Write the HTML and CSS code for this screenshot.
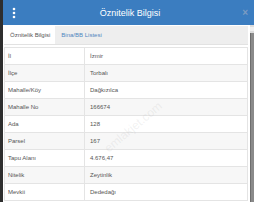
FILE: index.html
```html
<!DOCTYPE html>
<html lang="tr">
<head>
<meta charset="utf-8">
<title>Öznitelik Bilgisi</title>
<link rel="stylesheet" href="styles.css">
</head>
<body>
<div class="window">
  <div class="header">
    <svg class="dots" width="4" height="12" viewBox="0 0 4 12"><circle cx="2" cy="2" r="1.3" fill="#fff"/><circle cx="2" cy="6" r="1.3" fill="#fff"/><circle cx="2" cy="10" r="1.3" fill="#fff"/></svg>
    <div class="title">Öznitelik Bilgisi</div>
    <div class="close">×</div>
  </div>
  <div class="body">
    <div class="main">
      <div class="tabs">
        <div class="tab active">Öznitelik Bilgisi</div>
        <div class="tab">Bina/BB Listesi</div>
      </div>
      <table class="attrs">
        <tr><td>İl</td><td>İzmir</td></tr>
        <tr><td>İlçe</td><td>Torbalı</td></tr>
        <tr><td>Mahalle/Köy</td><td>Dağkızılca</td></tr>
        <tr><td>Mahalle No</td><td>166674</td></tr>
        <tr><td>Ada</td><td>128</td></tr>
        <tr><td>Parsel</td><td>167</td></tr>
        <tr><td>Tapu Alanı</td><td>4.676,47</td></tr>
        <tr><td>Nitelik</td><td>Zeytinlik</td></tr>
        <tr><td>Mevkii</td><td>Dededağı</td></tr>
      </table>
      <div class="watermark">emlakjet.com</div>
    </div>
    <div class="scrollbar">
      <div class="arrow"></div>
      <div class="thumb"></div>
    </div>
  </div>
</div>
</body>
</html>
```
FILE: styles.css
```css
html, body {
  margin: 0;
  padding: 0;
}
body {
  width: 254px;
  height: 202px;
  overflow: hidden;
  background: #2e2e2e;
  font-family: "Liberation Sans", Arial, sans-serif;
}
.window {
  margin-left: 3px;
  height: 202px;
  display: flex;
  flex-direction: column;
  background: #fff;
}
.header {
  height: 25px;
  flex: none;
  background: #3b7dc0;
  display: flex;
  align-items: center;
  padding: 0 6px 0 9px;
}
.dots {
  display: block;
}
.title {
  flex: 1;
  text-align: center;
  color: #fff;
  font-size: 9px;
  padding-left: 2px;
}
.close {
  color: #7b9cc2;
  font-size: 10px;
  font-weight: bold;
  line-height: 10px;
}
.body {
  flex: 1;
  display: flex;
  min-height: 0;
}
.main {
  flex: 1;
  position: relative;
  padding: 1px 2px 0 1px;
}
.tabs {
  height: 18px;
  background: #eeeeee;
  display: flex;
  border-bottom: 1px solid #e2e2e2;
}
.tab {
  font-size: 6px;
  color: #4f86c0;
  padding: 0 6px;
  display: flex;
  align-items: center;
}
.tab.active {
  background: #fff;
  color: #555;
  padding: 0 5px 0 6px;
}
.attrs {
  margin-top: 2px;
  width: 100%;
  border-collapse: collapse;
  font-size: 6px;
  color: #555;
}
.attrs td {
  height: 16px;
  padding: 0 0 0 3px;
  border: 1px solid #e4e4e4;
  vertical-align: middle;
}
.attrs td:first-child {
  width: 76px;
}
.attrs td:last-child {
  padding-left: 5px;
}
.attrs tr:nth-child(even) td {
  background: #f7f7f7;
}
.watermark {
  position: absolute;
  left: 95px;
  top: 95px;
  font-size: 12px;
  color: rgba(180, 180, 180, 0.18);
  transform: rotate(-40deg);
  pointer-events: none;
}
.scrollbar {
  width: 4px;
  flex: none;
  display: flex;
  flex-direction: column;
  padding-top: 2px;
  background: #dcdcdc;
}
.arrow {
  height: 4px;
  background: #f0f0f0;
}
.thumb {
  flex: 1;
  margin-top: 2px;
  background: #8a8a8a;
  border-left: 1px solid #6e6e6e;
}
```
